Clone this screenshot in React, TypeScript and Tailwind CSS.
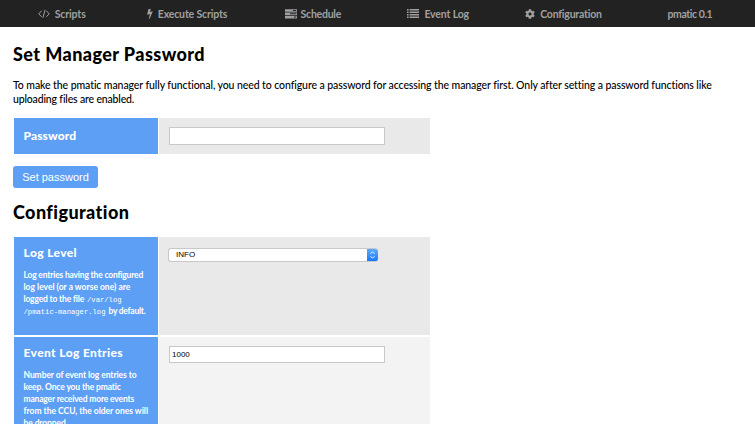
import type { ReactNode } from "react";
import { FaCog } from "react-icons/fa";

function CodeIcon() {
  return (
    <svg width="12" height="10" viewBox="0 0 12 10" fill="none" stroke="currentColor" strokeWidth="1">
      <path d="M3.6 1.8 .8 4.8l2.8 3M8.4 1.8l2.8 3-2.8 3M7.1.8 4.9 8.8" />
    </svg>
  );
}

function BoltIcon() {
  return (
    <svg width="6" height="10" viewBox="0 0 6 10" fill="currentColor">
      <path d="M1.5 0h2.3L2.9 2.9l2.9-.7L2.6 9.8h-.8l1.1-4.9L0 5.7z" />
    </svg>
  );
}

function TasksIcon() {
  return (
    <svg width="12" height="10" viewBox="0 0 12 10" fill="currentColor">
      <path
        fillRule="evenodd"
        d="M0 .2h12v2.6H0zM8 1v.9h3.3V1zM0 3.5h12v2.6H0zM5 4.3v.9h6.3v-.9zM0 6.8h12v2.6H0zM9 7.6v.9h2.3v-.9z"
      />
    </svg>
  );
}

function ListIcon() {
  return (
    <svg width="12" height="10" viewBox="0 0 12 10" fill="currentColor">
      <path d="M0 0h1.6v1.4H0zM0 2.5h1.6v1.4H0zM0 5h1.6v1.4H0zM0 7.5h1.6v1.4H0zM2.6 0H12v1.4H2.6zM2.6 2.5H12v1.4H2.6zM2.6 5H12v1.4H2.6zM2.6 7.5H12v1.4H2.6z" />
    </svg>
  );
}

function NavItem({ icon, gap, children }: { icon?: ReactNode; gap?: string; children: ReactNode }) {
  return (
    <a className={`flex items-center justify-center text-[10.5px] leading-[14px] font-bold text-[#a0a0a0] ${gap ?? ""}`}>
      {icon}
      {children}
    </a>
  );
}

function Line({ className, children }: { className: string; children: ReactNode }) {
  return <span className={`block whitespace-nowrap ${className}`}>{children}</span>;
}

export default function App() {
  return (
    <div className="h-[424px] overflow-hidden bg-white font-['Lato',sans-serif] text-black">
      <nav className="grid h-[27px] grid-cols-6 bg-[#222] pr-[3px]">
        <NavItem icon={<CodeIcon />} gap="gap-[5px] pr-[2px]">
          <span className="tracking-[-0.11px]">Scripts</span>
        </NavItem>
        <NavItem icon={<BoltIcon />} gap="gap-[5px] pr-[2px]">
          <span className="tracking-[-0.15px]">Execute Scripts</span>
        </NavItem>
        <NavItem icon={<TasksIcon />} gap="gap-[4px] pr-px">
          <span className="tracking-[-0.25px]">Schedule</span>
        </NavItem>
        <NavItem icon={<ListIcon />} gap="gap-[5px] pr-px">
          <span className="tracking-[-0.15px]">Event Log</span>
        </NavItem>
        <NavItem icon={<FaCog size={10} />} gap="gap-[5px] pr-px">
          <span className="tracking-[-0.21px]">Configuration</span>
        </NavItem>
        <NavItem gap="pl-px">
          <span className="tracking-[-0.41px]">pmatic 0.1</span>
        </NavItem>
      </nav>

      <main className="pt-[16px] pl-[13px]">
        <h1 className="text-[18px] leading-[22px] font-black tracking-[0.42px]">Set Manager Password</h1>
        <p className="mt-[13px] text-[10.5px] leading-[14px] font-medium">
          <Line className="tracking-[-0.087px]">
            To make the pmatic manager fully functional, you need to configure a password for accessing the manager
            first. Only after setting a password functions like
          </Line>
          <Line className="tracking-[-0.16px]">uploading files are enabled.</Line>
        </p>

        <div className="mt-[12px] ml-px flex h-[36px] w-[416px] gap-px">
          <div className="w-[144px] bg-[#5c9ff5] pt-[11px] pl-[9.5px] text-white">
            <Line className="text-[12px] leading-[14px] font-black tracking-[0.09px]">Password</Line>
          </div>
          <div className="flex-1 bg-[#e9e9e9] pt-[9px] pl-[10px]">
            <input type="password" className="block h-[18px] w-[216px] border border-[#c8c8c8] bg-white px-[3px] outline-none" />
          </div>
        </div>

        <button className="mt-[12px] block h-[22px] w-[85px] rounded-[3px] bg-[#5c9ff5] font-['Liberation_Sans',sans-serif] text-[11px] leading-[22px] whitespace-nowrap text-white">
          Set password
        </button>

        <h2 className="mt-[13px] text-[18px] leading-[22px] font-black tracking-[0.42px]">Configuration</h2>

        <div className="mt-[14px] ml-px flex w-[416px] flex-col gap-[2px]">
          <div className="flex h-[98px] gap-px">
            <div className="w-[144px] bg-[#5c9ff5] pt-[9px] pl-[9.5px] text-white">
              <Line className="text-[12px] leading-[14px] font-black tracking-[0.382px]">Log Level</Line>
              <div className="mt-[9px] text-[8.5px] leading-[12px] font-bold">
                <Line className="tracking-[-0.19px]">Log entries having the configured</Line>
                <Line className="tracking-[0px]">log level (or a worse one) are</Line>
                <Line className="h-[12px]">
                  <span className="tracking-[-0.18px]">logged to the file</span>
                  <code className="ml-[3px] font-['Liberation_Mono',monospace] text-[7.2px] font-normal">/var/log</code>
                </Line>
                <Line className="h-[12px]">
                  <code className="mr-[3px] font-['Liberation_Mono',monospace] text-[7.2px] font-normal">
                    /pmatic-manager.log
                  </code>
                  <span className="tracking-[-0.25px]">by default.</span>
                </Line>
              </div>
            </div>
            <div className="flex-1 bg-[#e9e9e9] pt-[11px] pl-[9px]">
              <div className="flex h-[14px] w-[210px] items-stretch overflow-hidden rounded-[3px] border border-r-0 border-[#c8c8c8] bg-white">
                <span className="flex-1 pl-[7px] font-['Liberation_Sans',sans-serif] text-[8px] leading-[12px]">INFO</span>
                <span className="-my-px flex w-[11px] items-center justify-center rounded-r-[3px] bg-linear-to-b from-[#62aefb] to-[#0b73fb] text-white">
                  <svg width="5" height="8" viewBox="0 0 5 8" fill="none" stroke="currentColor" strokeWidth="0.9">
                    <path d="M.5 2.8l2-2 2 2M.5 5.2l2 2 2-2" />
                  </svg>
                </span>
              </div>
            </div>
          </div>

          <div className="flex h-[98px] gap-px">
            <div className="w-[144px] bg-[#5c9ff5] pt-[9px] pl-[9.5px] text-white">
              <Line className="text-[12px] leading-[14px] font-black tracking-[0.384px]">Event Log Entries</Line>
              <div className="mt-[9px] text-[8.5px] leading-[12px] font-bold">
                <Line className="tracking-[-0.08px]">Number of event log entries to</Line>
                <Line className="tracking-[-0.13px]">keep. Once you the pmatic</Line>
                <Line className="tracking-[-0.168px]">manager received more events</Line>
                <Line className="tracking-[-0.017px]">from the CCU, the older ones will</Line>
                <Line className="tracking-[-0.1px]">be dropped.</Line>
              </div>
            </div>
            <div className="flex-1 bg-[#f3f3f3] pt-[9px] pl-[10px]">
              <input
                type="text"
                defaultValue="1000"
                className="block h-[17px] w-[216px] border border-[#c8c8c8] bg-white px-[2px] font-['Liberation_Sans',sans-serif] text-[8px] outline-none"
              />
            </div>
          </div>
        </div>
      </main>
    </div>
  );
}
